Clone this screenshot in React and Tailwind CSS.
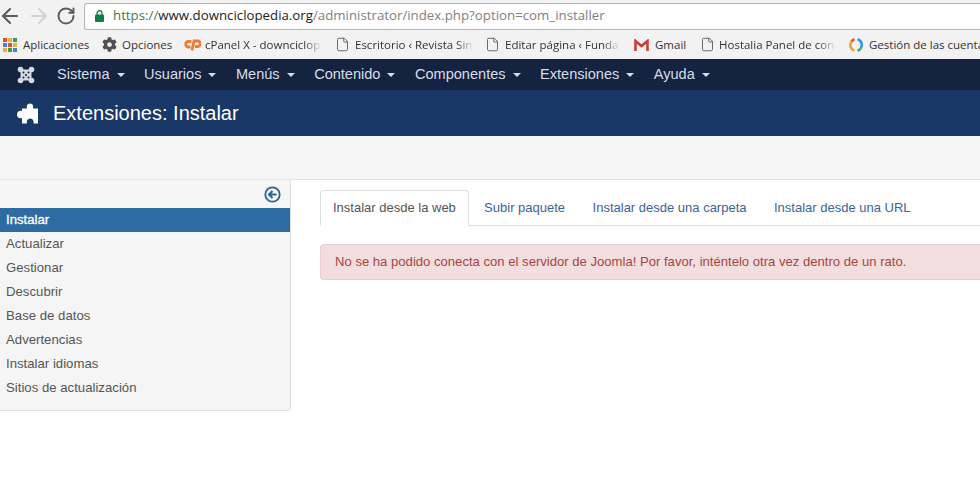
import { ArrowLeft, ArrowRight, RotateCw, File } from 'lucide-react'
import { FaCog } from 'react-icons/fa'

const bookmarks = [
  { label: 'Opciones', icon: 'gear', w: 'w-[82px]', box: 'w-[20px]' },
  { label: 'cPanel X - downciclop', icon: 'cp', w: 'w-[152px]', box: 'w-[21px]', fade: true },
  { label: 'Escritorio ‹ Revista Sin', icon: 'file', w: 'w-[150px]', box: 'w-[19px]', fade: true },
  { label: 'Editar página ‹ Funda', icon: 'file', w: 'w-[148px]', box: 'w-[19px]', fade: true },
  { label: 'Gmail', icon: 'gmail', w: 'w-[67px]', box: 'w-[21px]' },
  { label: 'Hostalia Panel de con', icon: 'file', w: 'w-[147px]', box: 'w-[18px]', fade: true },
  { label: 'Gestión de las cuenta', icon: 'ring', w: 'w-[132px]', box: 'w-[21px]' },
]

const menu = ['Sistema', 'Usuarios', 'Menús', 'Contenido', 'Componentes', 'Extensiones', 'Ayuda']
const side = ['Actualizar', 'Gestionar', 'Descubrir', 'Base de datos', 'Advertencias', 'Instalar idiomas', 'Sitios de actualización']
const tabs = ['Subir paquete', 'Instalar desde una carpeta', 'Instalar desde una URL']

function BookmarkIcon({ type }) {
  if (type === 'gear') return <FaCog size={15} className="text-[#505050]" />
  if (type === 'file') return <File size={15} strokeWidth={1.4} className="text-[#555] -ml-[1px]" />
  if (type === 'cp') {
    return (
      <svg width="17" height="13" viewBox="0 0 17 13">
        <path d="M7.500 3.500H4.500a2.700 2.700 0 0 0 0 5.500H6.500" fill="none" stroke="#ee7a2e" strokeWidth="2.800" />
        <path d="M8 12.500 10 3h3.500a2.600 2.600 0 0 1 0 5.500H11" fill="none" stroke="#ee7a2e" strokeWidth="2.800" />
      </svg>
    )
  }
  if (type === 'gmail') {
    return (
      <svg width="15" height="12" viewBox="0 0 15 12">
        <path d="M1.500 12V2L7.500 7l6-5v10" fill="none" stroke="#c5403a" strokeWidth="2.600" />
      </svg>
    )
  }
  return (
    <svg width="16" height="16" viewBox="0 0 16 16">
      <path d="M6.500 2.200A6 6 0 0 0 3.500 4.500" fill="none" stroke="#e8503f" strokeWidth="2.600" />
      <path d="M3.500 4.500A6 6 0 0 0 6.500 13.800" fill="none" stroke="#f0a030" strokeWidth="2.600" />
      <path d="M9.500 2.200A6 6 0 0 1 12.700 11.500" fill="none" stroke="#2f9ad8" strokeWidth="2.600" />
      <path d="M12.700 11.500A6 6 0 0 1 9.500 13.800" fill="none" stroke="#3fae6a" strokeWidth="2.600" />
    </svg>
  )
}

function AppsIcon() {
  const colors = ['#d9503f', '#e8b03a', '#3f9a55', '#4a7fd6', '#d9503f', '#e8b03a', '#e8b03a', '#3f9a55', '#4a7fd6']
  return (
    <div className="grid grid-cols-3 gap-px w-[14px] shrink-0">
      {colors.map((c, i) => (
        <span key={i} className="w-[4px] h-[4px]" style={{ backgroundColor: c }} />
      ))}
    </div>
  )
}

function JoomlaLogo() {
  return (
    <svg width="18" height="18" viewBox="0 0 18 18" className="shrink-0">
      <g fill="#d5dae2">
        <circle cx="3.500" cy="3.500" r="2.800" />
        <circle cx="14.500" cy="3.500" r="2.800" />
        <circle cx="3.500" cy="14.500" r="2.800" />
        <circle cx="14.500" cy="14.500" r="2.800" />
        <rect x="3.500" y="3.500" width="11" height="11" />
      </g>
      <g fill="#132340">
        <circle cx="6.500" cy="6.500" r="1" />
        <circle cx="11.500" cy="6.500" r="1" />
        <circle cx="9" cy="9" r="1" />
        <circle cx="6.500" cy="11.500" r="1" />
        <circle cx="11.500" cy="11.500" r="1" />
      </g>
    </svg>
  )
}

function PuzzleIcon() {
  return (
    <svg width="21" height="21" viewBox="0 0 21 21" className="shrink-0">
      <path fill="#fff" d="M10 5.500C9.300 3.500 10 .500 13 .500s3.700 3 3 5H21V20.500H16.500C17.200 18.500 16 15.500 13.200 15.500S9.300 18.500 10 20.500H5V15C3 15.800 0 15 0 11.500S3 7.200 5 8V5.500H10Z" />
    </svg>
  )
}

export default function App() {
  return (
    <div className="w-[980px] h-[481px] overflow-hidden bg-white font-['Liberation_Sans',Arial,sans-serif]">
      {/* chrome toolbar */}
      <div className="h-[32px] bg-[#f2f2f2] flex items-center">
        <ArrowLeft size={24} strokeWidth={2} className="text-[#5a5a5a] -ml-[2px] shrink-0" />
        <ArrowRight size={24} strokeWidth={2} className="text-[#d2d2d2] ml-[5px] shrink-0" />
        <RotateCw size={20} strokeWidth={2.3} className="text-[#5a5a5a] ml-[5px] shrink-0" />
        <div className="ml-[8px] flex-1 h-[27px] bg-white border border-[#b4b4b4] rounded-l-[3px] border-r-0 flex items-center pl-[10px] font-['Open_Sans',sans-serif] text-[13.28px]">
          <svg width="9" height="12" viewBox="0 0 9 12" className="mr-[9px] shrink-0">
            <rect x="0" y="4.500" width="9" height="7.500" rx="1" fill="#0b8043" />
            <path d="M2 5V3.200a2.500 2.500 0 0 1 5 0V5" fill="none" stroke="#0b8043" strokeWidth="1.300" />
          </svg>
          <span className="text-[#3c7a55]">https://</span>
          <span className="text-[#222]">www.downciclopedia.org</span>
          <span className="text-[#808080]">/administrator/index.php?option=com_installer</span>
        </div>
      </div>

      {/* bookmarks */}
      <div className="h-[27px] pb-[2px] bg-[#f2f2f2] flex items-center pl-[3px] font-['Open_Sans',sans-serif] text-[11.5px] text-[#333] whitespace-nowrap overflow-hidden">
        <div className="flex items-center gap-[6px] w-[99px] shrink-0">
          <AppsIcon />
          <span>Aplicaciones</span>
        </div>
        {bookmarks.map((b) => (
          <div key={b.label} className={`flex items-center shrink-0 ${b.w}`}>
            <span className={`flex items-center shrink-0 ${b.box}`}>
              <BookmarkIcon type={b.icon} />
            </span>
            <span className={b.fade ? 'pr-[2px] [mask-image:linear-gradient(to_right,black_85%,transparent)]' : ''}>{b.label}</span>
          </div>
        ))}
      </div>

      {/* joomla nav */}
      <nav className="h-[31px] bg-[#132340] flex items-center pl-[17px] text-[14.55px] text-[#d8dde5]">
        <JoomlaLogo />
        <div className="flex items-center ml-[22px] gap-[19.5px]">
          {menu.map((m) => (
            <div key={m} className="flex items-center gap-[7px]">
              <span>{m}</span>
              <span className="w-0 h-0 border-x-[4px] border-x-transparent border-t-[4px] border-t-[#d8dde5]" />
            </div>
          ))}
        </div>
      </nav>

      {/* title */}
      <header className="h-[46px] bg-[#1a3867] flex items-center pl-[17px] text-white text-[20px]">
        <PuzzleIcon />
        <h1 className="ml-[15px]">Extensiones: Instalar</h1>
      </header>

      {/* subhead */}
      <div className="h-[44px] bg-[#f5f5f5] border-b border-[#e4e4e4]" />

      <div className="flex">
        {/* sidebar */}
        <aside className="w-[291px] h-[231px] bg-[#f5f5f5] border-r border-b border-[#e1e1e1] rounded-br-[4px] text-[13.2px] text-[#555] shrink-0">
          <div className="h-[28px] flex items-center justify-end pr-[9px]">
            <svg width="17" height="17" viewBox="0 0 17 17">
              <circle cx="8.500" cy="8.500" r="7.200" fill="none" stroke="#2a6496" strokeWidth="1.800" />
              <path d="M12.500 8.500H5.500M8.500 5 5 8.500 8.500 12" fill="none" stroke="#2a6496" strokeWidth="2" />
            </svg>
          </div>
          <div className="h-[24px] bg-[#2d6ca2] text-white flex items-center pl-[6px] [-webkit-text-stroke:0.3px_white]">Instalar</div>
          {side.map((s) => (
            <div key={s} className="h-[24px] flex items-center pl-[6px]">{s}</div>
          ))}
        </aside>

        {/* content */}
        <main className="flex-1 ml-[29px] pt-[10px]">
          <div className="flex h-[36px] border-b border-[#ddd] text-[13px]">
            <div className="h-[36px] px-[12px] flex items-center bg-white border border-[#ddd] border-b-white rounded-t-[4px] text-[#555]">
              Instalar desde la web
            </div>
            <div className="flex ml-[1.5px]">
              {tabs.map((t) => (
                <div key={t} className="h-[35px] px-[13.75px] flex items-center text-[#3b6598]">{t}</div>
              ))}
            </div>
          </div>
          <div className="mt-[18px] h-[36px] bg-[#f2dede] border border-[#ebccd1] border-r-0 rounded-l-[4px] flex items-center pl-[14px] text-[13.1px] text-[#a94442]">
            No se ha podido conecta con el servidor de Joomla! Por favor, inténtelo otra vez dentro de un rato.
          </div>
        </main>
      </div>
    </div>
  )
}
